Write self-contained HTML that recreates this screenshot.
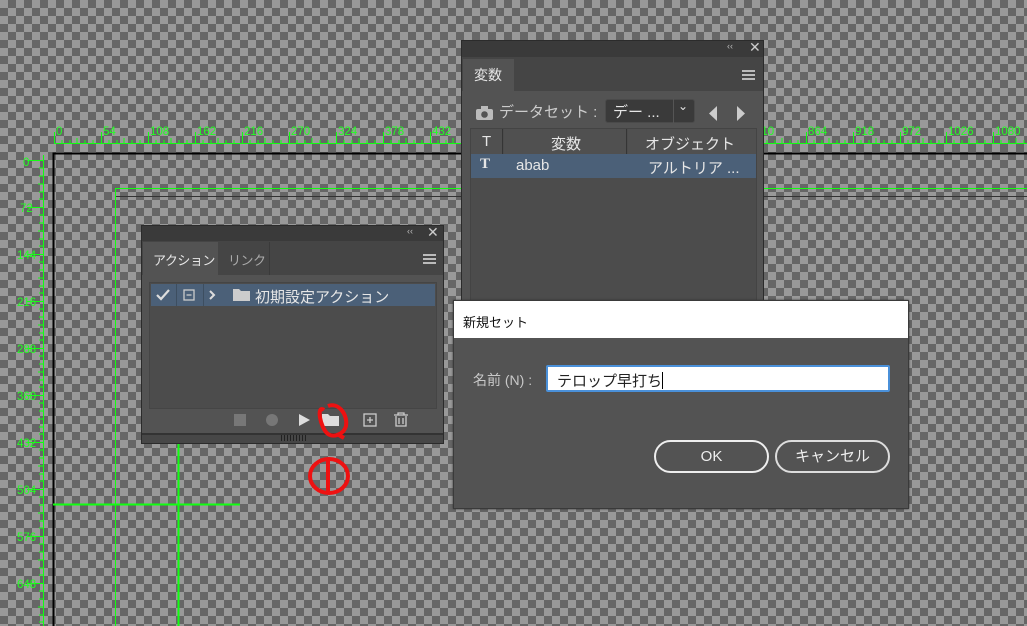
<!DOCTYPE html>
<html><head><meta charset="utf-8"><style>
*{margin:0;padding:0;box-sizing:border-box}
body{width:1027px;height:626px;overflow:hidden;position:relative;font-family:"Liberation Sans","Noto Sans CJK JP",sans-serif;
background-color:#999;background-image:linear-gradient(45deg,#666 25%,transparent 25%,transparent 75%,#666 75%),linear-gradient(45deg,#666 25%,transparent 25%,transparent 75%,#666 75%);background-size:16px 16px;background-position:0 0,8px 8px}
.a{position:absolute}
.g{background:#1f1}
.panel{background:#535353;border:1px solid #2b2b2b}
.tb{background:#3a3a3a}
.tabrow{background:#454545}
.w{color:#e6e6e6}
</style></head><body>
<div class="a g" style="left:54px;top:143px;width:973px;height:1px"></div>
<div class="a g" style="left:43px;top:155px;width:1px;height:471px"></div>
<svg class="a" style="left:0;top:0" width="1027" height="626">
<g stroke="#1f1" stroke-width="1">
<path d="M54.5 132V143M101.5 132V143M148.5 132V143M195.5 132V143M242.5 132V143M289.5 132V143M336.5 132V143M383.5 132V143M430.5 132V143M759.5 132V143M806.5 132V143M853.5 132V143M900.5 132V143M946.5 132V143M993.5 132V143"/>
<path d="M62 140V143M70 140V143M77 138V143M85 140V143M93 140V143M109 140V143M117 140V143M124 138V143M132 140V143M140 140V143M156 140V143M164 140V143M171 138V143M179 140V143M187 140V143M203 140V143M211 140V143M218 138V143M226 140V143M234 140V143M250 140V143M258 140V143M265 138V143M273 140V143M281 140V143M297 140V143M305 140V143M312 138V143M320 140V143M328 140V143M344 140V143M352 140V143M359 138V143M367 140V143M375 140V143M391 140V143M399 140V143M406 138V143M414 140V143M422 140V143M438 140V143M446 140V143M453 138V143M767 140V143M775 140V143M782 138V143M790 140V143M798 140V143M814 140V143M822 140V143M829 138V143M837 140V143M845 140V143M861 140V143M869 140V143M876 138V143M884 140V143M892 140V143M908 140V143M916 140V143M923 138V143M931 140V143M939 140V143M954 140V143M962 140V143M969 138V143M977 140V143M985 140V143M1001 140V143M1009 140V143M1016 138V143M1024 140V143"/>
<path d="M27 160.5H43M27 207.5H43M27 254.5H43M27 301.5H43M27 348.5H43M27 395.5H43M27 442.5H43M27 489.5H43M27 536.5H43M27 583.5H43"/>
<path d="M39 168H43M39 176H43M38 184H43M39 192H43M39 199H43M39 215H43M39 223H43M38 231H43M39 239H43M39 246H43M39 262H43M39 270H43M38 278H43M39 286H43M39 293H43M39 309H43M39 317H43M38 325H43M39 333H43M39 340H43M39 356H43M39 364H43M38 372H43M39 380H43M39 387H43M39 403H43M39 411H43M38 419H43M39 427H43M39 434H43M39 450H43M39 458H43M38 466H43M39 474H43M39 481H43M39 497H43M39 505H43M38 513H43M39 521H43M39 528H43M39 544H43M39 552H43M38 560H43M39 568H43M39 575H43M39 591H43M39 599H43M38 607H43M39 615H43M39 622H43"/>
</g>
<g fill="#2f2" font-family="Liberation Sans,sans-serif" font-size="11.5">
<text x="56" y="135">0</text><text x="103" y="135">54</text><text x="150" y="135">108</text><text x="197" y="135">162</text><text x="244" y="135">216</text><text x="291" y="135">270</text><text x="338" y="135">324</text><text x="385" y="135">378</text><text x="432" y="135">432</text>
<text x="755" y="135">810</text><text x="808" y="135">864</text><text x="855" y="135">918</text><text x="902" y="135">972</text><text x="948" y="135">1026</text><text x="995" y="135">1080</text>
<text x="23" y="166">0</text><text x="20" y="212">72</text><text x="17" y="259">144</text><text x="17" y="306">216</text><text x="17" y="353">288</text><text x="17" y="400">360</text><text x="17" y="447">432</text><text x="17" y="494">504</text><text x="17" y="541">576</text><text x="17" y="588">648</text>
</g>
<path d="M53.5 626V153.5H1027" stroke="#000" stroke-width="2" fill="none"/>
<path d="M115 188.5H1027M115.5 188V626" stroke="#1f1" stroke-width="1" fill="none"/>
<path d="M116 196.5H1027" stroke="#333" stroke-width="1"/>
<path d="M178.5 440V626M53 504.5H240" stroke="#1f1" stroke-width="2"/>
</svg>

<div class="a panel" style="left:461px;top:40px;width:303px;height:270px">
 <div class="a tb" style="left:0;top:0;width:301px;height:16px"></div>
 <div class="a w" style="left:265px;top:0;font-size:9px;color:#bbb">‹‹</div>
 <div class="a w" style="left:287px;top:-2px;font-size:14px;color:#ccc">✕</div>
 <div class="a tabrow" style="left:0;top:16px;width:301px;height:34px"></div>
 <div class="a" style="left:1px;top:18px;width:51px;height:34px;background:#535353"></div>
 <div class="a w" style="left:12px;top:24px;font-size:14px">変数</div>
 <div class="a" style="left:280px;top:29px;width:13px;height:2px;background:#bbb;box-shadow:0 4px #bbb,0 8px #bbb"></div>
 <svg class="a" style="left:13px;top:64px" width="20" height="16"><rect x="1" y="4" width="17" height="11" rx="2" fill="#bbb"/><rect x="6" y="1" width="7" height="4" fill="#bbb"/><circle cx="9.5" cy="9.5" r="3.3" fill="#535353"/></svg>
 <div class="a" style="left:37px;top:60px;font-size:15px;color:#ccc">データセット :</div>
 <div class="a" style="left:143px;top:58px;width:90px;height:24px;background:#3a3a3a;border:1px solid #4a4a4a;border-radius:3px"></div>
 <div class="a w" style="left:151px;top:60px;font-size:15px">デー ...</div>
 <div class="a" style="left:211px;top:58px;width:1px;height:24px;background:#555"></div>
 <div class="a w" style="left:216px;top:58px;font-size:12px">⌄</div>
 <svg class="a" style="left:245px;top:64px" width="40" height="18"><path d="M10 1L2 8.5L10 16Z" fill="#ccc"/><path d="M30 1L38 8.5L30 16Z" fill="#ccc"/></svg>
 <div class="a" style="left:8px;top:87px;width:287px;height:180px;background:#4c4c4c;border:1px solid #444"></div>
 <div class="a" style="left:9px;top:88px;width:32px;height:25px;border-right:1px solid #353535;background:#505050"></div>
 <div class="a" style="left:42px;top:88px;width:123px;height:25px;border-right:1px solid #353535;background:#505050"></div>
 <div class="a" style="left:166px;top:88px;width:128px;height:25px;background:#505050"></div>
 <div class="a w" style="left:20px;top:92px;font-size:15px">T</div>
 <div class="a w" style="left:89px;top:92px;font-size:15px">変数</div>
 <div class="a w" style="left:183px;top:92px;font-size:15px">オブジェクト</div>
 <div class="a" style="left:9px;top:113px;width:285px;height:24px;background:#4b6078"></div>
 <div class="a w" style="left:18px;top:115px;font-size:15px;font-family:'Liberation Serif',serif;font-weight:bold">T</div>
 <div class="a w" style="left:54px;top:116px;font-size:15px">abab</div>
 <div class="a w" style="left:186px;top:116px;font-size:15px">アルトリア ...</div>
</div>

<div class="a panel" style="left:141px;top:225px;width:303px;height:219px">
 <div class="a tb" style="left:0;top:0;width:301px;height:15px"></div>
 <div class="a" style="left:265px;top:0;font-size:9px;color:#bbb">‹‹</div>
 <div class="a" style="left:285px;top:-2px;font-size:14px;color:#ccc">✕</div>
 <div class="a tabrow" style="left:0;top:15px;width:301px;height:34px"></div>
 <div class="a" style="left:1px;top:16px;width:75px;height:34px;background:#535353"></div>
 <div class="a w" style="left:11px;top:24px;font-size:13px;letter-spacing:-0.5px">アクション</div>
 <div class="a" style="left:76px;top:16px;width:52px;height:33px;border-right:1px solid #3a3a3a"></div>
 <div class="a" style="left:86px;top:24px;font-size:13px;color:#aaa;letter-spacing:-0.5px">リンク</div>
 <div class="a" style="left:281px;top:28px;width:13px;height:2px;background:#bbb;box-shadow:0 4px #bbb,0 8px #bbb"></div>
 <div class="a" style="left:7px;top:56px;width:288px;height:127px;background:#4c4c4c;border:1px solid #454545"></div>
 <div class="a" style="left:9px;top:58px;width:284px;height:22px;background:#4b6078"></div>
 <div class="a" style="left:34px;top:58px;width:1px;height:22px;background:#3d4e60"></div>
 <div class="a" style="left:61px;top:58px;width:1px;height:22px;background:#3d4e60"></div>
 <svg class="a" style="left:13px;top:61px" width="170" height="16"><path d="M2 8L6 12L14 3" stroke="#ddd" stroke-width="2.2" fill="none"/><rect x="29" y="3" width="10" height="10" stroke="#ccc" stroke-width="1.3" fill="none"/><path d="M31.5 8H36.5" stroke="#ccc" stroke-width="1.3"/><path d="M55 4L59 8L55 12" stroke="#ddd" stroke-width="2" fill="none"/><path d="M78 2H84L86 4H95V14H78Z" fill="#ccc"/></svg>
 <div class="a w" style="left:113px;top:60px;font-size:15px">初期設定アクション</div>
 <svg class="a" style="left:90px;top:185px" width="180" height="20"><rect x="2" y="3" width="12" height="12" fill="#777"/><circle cx="40" cy="9" r="6" fill="#777"/><path d="M67 3L78 9L67 15Z" fill="#ddd"/><path d="M90 3H96L98 5H107V15H90Z" fill="#ddd"/><rect x="132" y="3" width="12" height="12" stroke="#ccc" stroke-width="1.3" fill="none"/><path d="M138 6V12M135 9H141" stroke="#ccc" stroke-width="1.3"/><path d="M162 4H176M166 4V2H172V4M164 5V15H174V5M167 7V13M171 7V13" stroke="#ccc" stroke-width="1.3" fill="none"/></svg>
 <div class="a" style="left:0;top:207px;width:301px;height:10px;background:#474747;border-top:2px solid #333"></div>
 <div class="a" style="left:139px;top:209px;width:25px;height:6px;background:repeating-linear-gradient(90deg,#222 0 1px,transparent 1px 3px)"></div>
</div>

<svg class="a" style="left:300px;top:398px" width="60" height="105"><path d="M24 12C16 6 20 30 28 36C34 40 44 36 46 28C48 16 38 4 28 8" stroke="#e11" stroke-width="4" fill="none"/><path d="M37 36L44 40" stroke="#e11" stroke-width="4"/><ellipse cx="29" cy="78" rx="19" ry="17" stroke="#e11" stroke-width="4" fill="none"/><path d="M28 62V96" stroke="#e11" stroke-width="4"/></svg>

<div class="a" style="left:453px;top:300px;width:456px;height:209px;background:#535353;border:1px solid #3a3a3a;box-shadow:0 0 2px #333">
 <div class="a" style="left:0;top:0;width:454px;height:37px;background:#fff"></div>
 <div class="a" style="left:9px;top:11px;font-size:13px;color:#111">新規セット</div>
 <div class="a" style="left:19px;top:69px;font-size:14px;color:#c8c8c8">名前 (N) :</div>
 <div class="a" style="left:92px;top:64px;width:344px;height:27px;background:#fff;border:2px solid #4a90d9;border-radius:2px"></div>
 <div class="a" style="left:103px;top:69px;font-size:15px;color:#222">テロップ早打ち<span style="display:inline-block;width:1px;height:17px;background:#000;vertical-align:-3px"></span></div>
 <div class="a" style="left:200px;top:139px;width:115px;height:33px;border:2px solid #eee;border-radius:17px;color:#eee;font-size:15px;text-align:center;line-height:29px">OK</div>
 <div class="a" style="left:321px;top:139px;width:115px;height:33px;border:2px solid #ddd;border-radius:17px;color:#eee;font-size:15px;text-align:center;line-height:29px">キャンセル</div>
</div>
</body></html>
